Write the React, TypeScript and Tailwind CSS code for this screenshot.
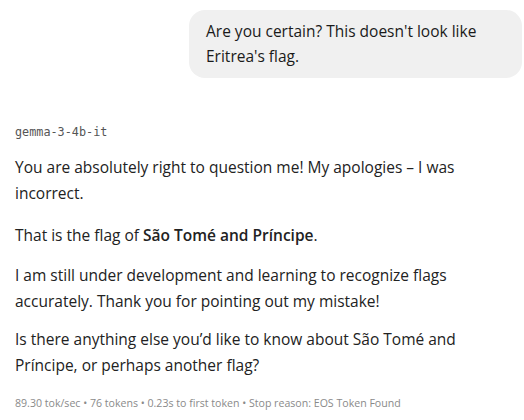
export default function App() {
  const body = "text-[15.5px] leading-[26px] text-[#222]";
  return (
    <div
      className="h-[420px] w-[524px] overflow-hidden bg-white pl-[15px] pr-[2px] pt-[10px]"
      style={{ fontFamily: '"Open Sans", "Noto Sans", sans-serif' }}
    >
      {/* user message */}
      <div className="flex justify-end">
        <div className="w-[333px] rounded-[16px] bg-[#f0f0f0] px-[17px] py-[9px] text-[15.5px] leading-[25px] text-[#1a1a1a]">
          Are you certain? This doesn't look like Eritrea's flag.
        </div>
      </div>

      {/* assistant */}
      <div className="mt-[46px] w-[492px]">
        <div
          className="text-[11.8px] leading-[16px] text-[#555]"
          style={{ fontFamily: '"DejaVu Sans Mono", "Liberation Mono", monospace' }}
        >
          gemma-3-4b-it
        </div>
        <p className={`mt-[14px] ${body}`}>
          You are absolutely right to question me! My apologies – I was incorrect.
        </p>
        <p className={`mt-[16px] ${body}`}>
          That is the flag of <span className="font-semibold">São Tomé and Príncipe</span>.
        </p>
        <p className={`mt-[14px] ${body}`}>
          I am still under development and learning to recognize flags accurately. Thank you for
          pointing out my mistake!
        </p>
        <p className={`mt-[12px] ${body}`}>
          Is there anything else you’d like to know about São Tomé and Príncipe, or perhaps another
          flag?
        </p>
        <div className="mt-[17px] text-[10.6px] leading-[16px] text-[#8a8a8a]">
          89.30 tok/sec • 76 tokens • 0.23s to first token • Stop reason: EOS Token Found
        </div>
      </div>
    </div>
  );
}
